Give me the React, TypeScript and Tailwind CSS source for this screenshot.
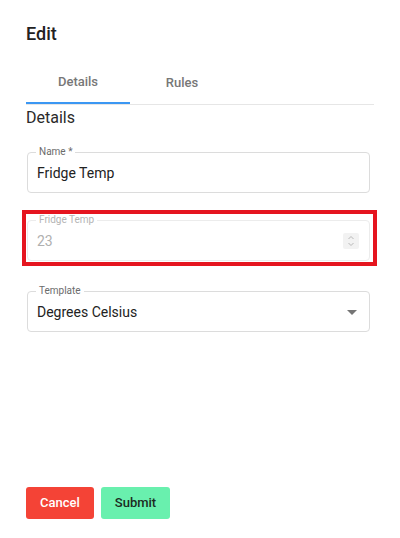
import React from "react";

function Field({
  label,
  value,
  disabled,
  children,
}: {
  label: string;
  value: string;
  disabled?: boolean;
  children?: React.ReactNode;
}) {
  return (
    <div
      className={`relative h-[41px] w-[343px] rounded-[4px] border ${
        disabled ? "border-[#ececec]" : "border-[#dcdcdc]"
      }`}
    >
      <span
        className={`absolute left-[8px] top-[-7px] bg-white px-[3px] text-[10px] leading-[12px] ${
          disabled ? "text-[#b4b4b4]" : "text-[#6b6b6b]"
        }`}
      >
        {label}
      </span>
      <div className="flex h-full items-center justify-between pl-[9px] pr-[10px] pt-[1px]">
        <span
          className={`text-[14px] ${
            disabled ? "text-[#b0b0b0]" : "text-[#222222]"
          }`}
        >
          {value}
        </span>
        {children}
      </div>
    </div>
  );
}

export default function App() {
  return (
    <div
      className="h-[538px] w-[400px] bg-white"
      style={{ fontFamily: "Roboto, 'Liberation Sans', sans-serif" }}
    >
      <div className="px-[26px] pt-[22px]">
        <h1 className="text-[18px] font-medium leading-[24px] text-[#222222]">
          Edit
        </h1>

        {/* Tabs */}
        <div className="mt-[14px] flex border-b border-[#e6e6e6]">
          <div className="flex h-[44px] w-[104px] items-center justify-center border-b-2 border-[#3b97f3] pt-[2px] text-[13px] font-medium text-[#777777]">
            Details
          </div>
          <div className="flex h-[44px] w-[104px] items-center justify-center pt-[2px] text-[13px] font-medium text-[#777777]">
            Rules
          </div>
        </div>

        <h2 className="mt-[3px] text-[16px] leading-[20px] text-[#2a2a2a]">
          Details
        </h2>
      </div>

      <div className="ml-[27px] mt-[24px]">
        <Field label="Name *" value="Fridge Temp" />
      </div>

      {/* highlighted field */}
      <div className="ml-[22px] mt-[17px] h-[56px] w-[355px] border-[4px] border-[#e5151f] pl-[1px] pt-[6px]">
        <Field label="Fridge Temp" value="23" disabled>
          <div className="mt-[-1px] flex h-[16px] w-[16px] flex-col items-center justify-center rounded-[2px] bg-[#f2f2f2]">
            <svg width="8" height="12" viewBox="0 0 8 12" fill="none">
              <path d="M1.5 4 L4 1.5 L6.5 4" stroke="#b8b8b8" strokeWidth="1" />
              <path d="M1.5 8 L4 10.5 L6.5 8" stroke="#b8b8b8" strokeWidth="1" />
            </svg>
          </div>
        </Field>
      </div>

      <div className="ml-[27px] mt-[25px]">
        <Field label="Template" value="Degrees Celsius">
          <svg width="10" height="5" viewBox="0 0 10 5" className="mr-[2px]">
            <path d="M0 0 L10 0 L5 5 Z" fill="#757575" />
          </svg>
        </Field>
      </div>

      <div className="ml-[26px] mt-[155px] flex gap-[7px]">
        <button className="h-[32px] w-[68px] rounded-[3px] bg-[#f44336] text-[13px] font-medium text-white">
          Cancel
        </button>
        <button className="h-[32px] w-[69px] rounded-[3px] bg-[#69f0ae] text-[13px] font-medium text-[#1c2b22]">
          Submit
        </button>
      </div>
    </div>
  );
}
